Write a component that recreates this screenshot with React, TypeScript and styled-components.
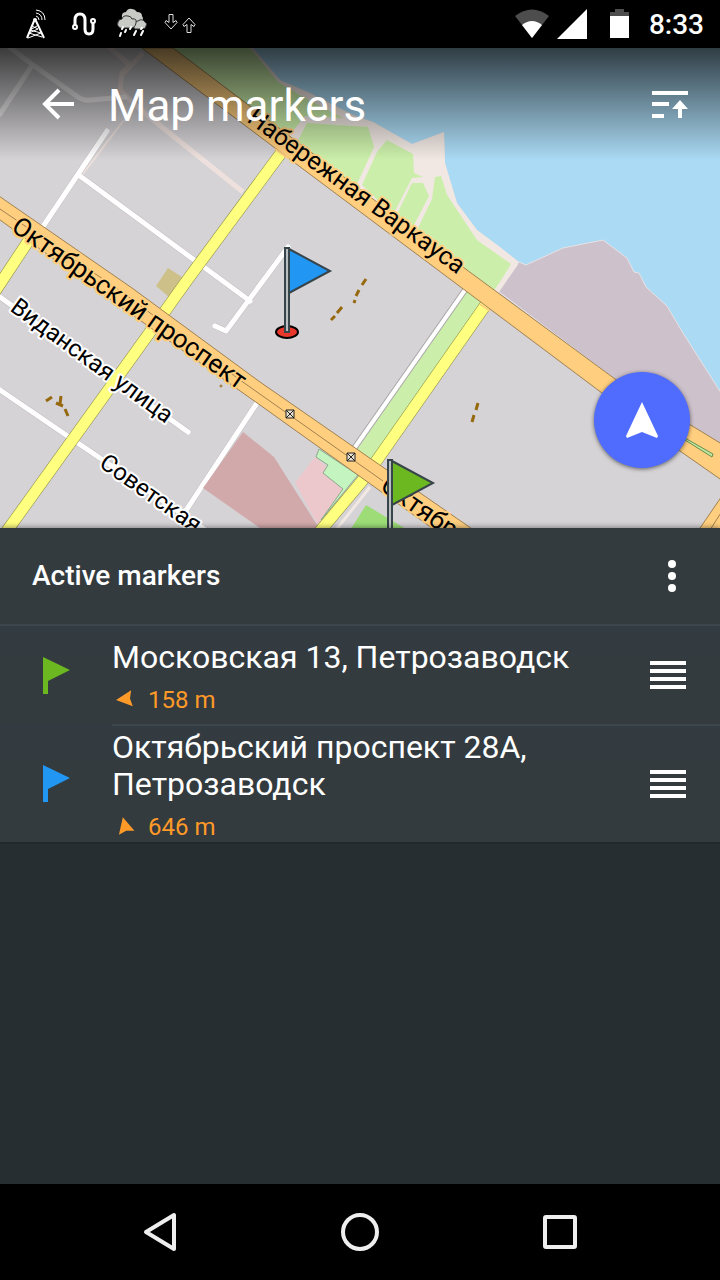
import React from "react";
import styled, { createGlobalStyle } from "styled-components";

const GlobalStyle = createGlobalStyle`
  *, *::before, *::after { box-sizing: border-box; }
  body { margin: 0; background: #262d31; }
  button { padding: 0; border: 0; background: none; color: inherit; font: inherit; cursor: pointer; }
  svg { display: block; }
`;

const Screen = styled.div`
  display: flex;
  flex-direction: column;
  min-height: 100vh;
  color: #fff;
  font-family: Roboto, "Noto Sans", sans-serif;
`;

const StatusBar = styled.header`
  display: flex;
  justify-content: space-between;
  align-items: center;
  height: 48px;
  padding: 0 16px 0 26px;
  background: #000;
`;

const StatusGroup = styled.div`
  display: flex;
  align-items: center;
  gap: 20px;
`;

const Clock = styled.time`
  padding-top: 2px;
  font-size: 28px;
  font-weight: 500;
  line-height: 32px;
`;

const MapArea = styled.section`
  position: relative;
  height: 480px;
  overflow: hidden;
  background: #d5d3d6;
`;

const MapDrawing = styled.svg`
  width: 100%;
  height: 100%;
`;

const StreetName = styled.text<{ $halo: string; $size: number }>`
  font-size: ${(p) => p.$size}px;
  fill: #000;
  stroke: ${(p) => p.$halo};
  stroke-width: 4px;
  stroke-linejoin: round;
  paint-order: stroke;
`;

const AppBar = styled.div`
  position: absolute;
  inset: 0 0 auto;
  display: flex;
  align-items: center;
  gap: 24px;
  height: 112px;
  padding: 0 24px 0 32px;
  background: linear-gradient(rgba(0, 0, 0, 0.72), rgba(0, 0, 0, 0));
`;

const Title = styled.h1`
  flex: 1;
  margin: 0;
  padding-top: 4px;
  font-size: 44px;
  font-weight: 400;
  line-height: 52px;
`;

const IconButton = styled.button`
  display: grid;
  flex: none;
  place-items: center;
  width: 52px;
  height: 56px;
`;

const LocateButton = styled.button`
  position: absolute;
  right: 30px;
  bottom: 60px;
  display: grid;
  place-items: center;
  width: 96px;
  height: 96px;
  border-radius: 50%;
  background: #4f6cff;
  box-shadow: 0 1px 4px rgba(0, 0, 0, 0.55);
`;

const Panel = styled.main`
  position: relative;
  flex: 1;
  background: #272e32;
  box-shadow: 0 -1px 5px rgba(0, 0, 0, 0.4);
`;

const PanelHeader = styled.div`
  display: flex;
  align-items: center;
  justify-content: space-between;
  height: 98px;
  padding: 0 22px 0 32px;
  border-bottom: 2px solid #3e464d;
  background: #333b3e;
`;

const PanelTitle = styled.h2`
  margin: 0;
  font-size: 28px;
  font-weight: 500;
  line-height: 32px;
`;

const MarkerList = styled.ul`
  margin: 0;
  padding: 0;
  list-style: none;
  border-bottom: 2px solid #22292c;
`;

const MarkerRow = styled.li`
  display: flex;
  align-items: stretch;
  background: linear-gradient(#333b42, #333b3e 50px);
`;

const FlagCell = styled.div`
  display: grid;
  flex: none;
  place-items: center;
  width: 112px;
`;

const MarkerBody = styled.div<{ $divided: boolean }>`
  display: flex;
  flex: 1;
  align-items: center;
  justify-content: space-between;
  gap: 16px;
  min-height: 100px;
  padding: 0 26px 1px 0;
  border-bottom: ${(p) => (p.$divided ? "2px solid #3e464d" : "0")};
`;

const MarkerText = styled.div`
  display: flex;
  flex-direction: column;
  gap: 10px;
  padding-top: 3px;
`;

const MarkerName = styled.div`
  font-size: 32px;
  line-height: 37px;
`;

const Distance = styled.div`
  display: flex;
  align-items: center;
  gap: 12px;
  color: #ff9a29;
  font-size: 24px;
  line-height: 28px;
`;

const HandleButton = styled(IconButton)`
  height: 44px;
`;

const NavBar = styled.nav`
  display: flex;
  justify-content: center;
  height: 96px;
  background: #000;
`;

const NavButton = styled.button`
  display: grid;
  place-items: center;
  width: 200px;
`;

const markers = [
  { name: "Московская 13, Петрозаводск", distance: "158 m", color: "#6cb820", heading: -96 },
  { name: "Октябрьский проспект 28А, Петрозаводск", distance: "646 m", color: "#2196f3", heading: -14 },
];

function StatusIcons() {
  return (
    <svg width="172" height="32" viewBox="26 8 172 32" fill="none" stroke="#fff" aria-hidden="true">
      <g strokeWidth="2">
        <path d="M34 21 27 38M36 21l8 17" />
        <path d="m32 26 6 3-9 4 13 4M37 26l-7 4 11 3-13 5" strokeWidth="1" />
        <circle cx="35" cy="20" r="2" fill="#fff" stroke="none" />
        <path d="M36 16q3 1 3 4M36 13q6 1 6 7M36 10q9 1 9 10" strokeWidth="1" />
      </g>
      <path d="M75 25V20q0-6 5-6t5 6v9q0 5 4 5t4-5v-6" strokeWidth="3" />
      <circle cx="75" cy="27" r="2" fill="#000" strokeWidth="2" />
      <circle cx="93" cy="21" r="2" fill="#000" strokeWidth="2" />
      <g fill="#c8cac6" stroke="none">
        <path d="M122 18q-1-6 4-6 2-4 6-3 3 0 5 3 5 0 5 4 2 3 0 6h-20z" />
        <path d="M134 28q-1-7 4-7 4-3 7 1 3 2 1 4 0 3-4 3h-7z" stroke="#333" />
        <path d="M120 28q-4-3-2-6 1-3 4-3 1-4 6-3 3 0 4 3 5-1 4 4-1 5-5 5z" stroke="#333" />
      </g>
      <path d="m123 27-1 2m9-2-1 2m12-1-1 1M121 33l-1 3m6-6-1 2m11-1-2 4m9-4-2 4" strokeWidth="2" strokeLinecap="round" />
      <path d="M169 14.500h4v8l3-2 1 2-6 6.500-6-6.500 1-2 3 2zM187 32.500h4v-8l3 2 1-2-6-6.500-6 6.500 1 2 3-2z" stroke="#ddd" />
    </svg>
  );
}

function MapView() {
  return (
    <MapDrawing viewBox="0 48 720 480" preserveAspectRatio="xMidYMid slice" role="img" aria-label="Map">
      <path fill="#aadaf4" d="M253 48 280 80 310 93 353 115 373 122 412 144 444 132 445 163 457 203 477 230 519 262 526 265 563 248 603 240 627 258 634 272 639 273 646 287 667 306 683 333 720 393V48Z" />
      <path fill="#f1e8e3" d="M160 48H253L280 80 310 93 353 115 373 122 412 144 444 132 445 163 457 203 477 230 500 247 519 262 495 295Z" />
      <path fill="#cbefaa" d="M170 48H250L278 82 300 95 343 118 305 116 292 132 284 140Z" />
      <path fill="#cbefaa" d="m307 123 61 4 6 20-16 35-2 8-60-46zM387 140l26 14 1 19 9 4-11 1-17 33-4 2-29-28 15-33zM412 183h11l6 13-16 31-3 4-14-15zM435 177l6-1 6 19 30 45 34 24-15 25-4 3-76-60 16-33z" />
      <path fill="#cdc1cb" stroke="#e6e2e6" d="m519 262 7 3 37-17 40-8 24 18 7 14 5 1 7 14 21 19 16 27 40 63v65l-225-170z" />
      <path stroke="#f1e8e3" strokeWidth="5" d="m516 263-20 29" />

      <g fill="none" stroke="#eee1dd" strokeWidth="5">
        <path d="m108 46 22 19-8 8-2 17 7 7 20 18 96 77M143 53l-20 21" />
        <path strokeWidth="2" d="m124 120-42 55" />
      </g>
      <g fill="none" stroke="#c4c0c2" strokeWidth="6" strokeLinejoin="round">
        <path d="m107 131-65 97M80 176l170 125M288 247l-62 84-11-5M0 297l188 135M0 390l210 143M257 403l-74 112" />
      </g>
      <g fill="none" stroke="#fff" strokeWidth="5" strokeLinejoin="round" strokeLinecap="round">
        <path d="m107 131-65 97M80 176l170 125M288 247l-62 84-11-5M0 297l188 135M0 390l210 143M257 403l-74 112" />
        <path stroke="#f5f3f4" d="m8 46 25 19 45 32q6 4 12 3l35-3M31 67 0 114" />
      </g>

      <path fill="#cdc189" d="m168 268 14 9-13 20-13-11z" />
      <path fill="#d2a9ab" d="m243 432 31 25 45 71h-59l-57-40z" />
      <path fill="#ecc8cc" d="m315 457 12 10-4 6 20 16-25 36-23-42z" />
      <path fill="#c4f4c0" stroke="#8da98b" d="m319 449 39 26-37 45 22-31-20-16 5-8-12-8z" />
      <path fill="#9ddc77" d="m366 505 45 27h-62z" />
      <path stroke="#f1e8e3" strokeWidth="3" d="m370 487-34 43" />
      <path fill="#cbefaa" d="m466 291 16 12-110 158-16-10z" />
      <path stroke="#aaa6a8" strokeWidth="6" d="m465 290-112 160" />
      <path stroke="#fff" strokeWidth="4" d="m465 290-112 160" />

      <g fill="none" stroke="#89893f" strokeWidth="12">
        <path d="M29 240-12 302M284 149 188 279l-25 35L4 535" />
        <path d="m487 303-112 160-13 18-46 55" />
      </g>
      <g fill="none" stroke="#ffff80" strokeWidth="11">
        <path d="M29 240-12 302M284 149 188 279l-25 35L4 535" />
        <path d="m487 303-112 160-13 18-46 55" />
      </g>

      <g fill="#ffcf7f" stroke="#a08150">
        <path d="M173 48 467 270 615 379 730 449V486L680 451 602 393 490 309 287 157 142 48Z" />
        <path d="M-4 194 132 288 260 382 387 470 478 533H439L383 493 260 405 83 280-4 217Z" />
        <path d="m724 493-26 38h26z" />
        <path fill="#bfe79d" stroke="#688d4e" d="m685 438 28 16-1 3-27-17z" />
      </g>
      <path fill="none" stroke="#a08150" d="m0 209 122 83 118 88 143 101M724 508l-14 22" />
      <path d="M275 149 289 159M25 236l10 7M480 304l10 7" stroke="#ffcf7f" strokeWidth="2" fill="none" />

      <g stroke="#96690f" strokeWidth="3" fill="none">
        <path d="m52 397-6 4M61 396l-1 8m-4-1 7 3M65 409l3 7M366 279l-4 6m-3 5-3 6m-1 4-1 3M342 307l-5 6m-2 3-4 4M478 403l-2 7m-2 5-2 7" />
        <circle cx="221" cy="386" r="1" strokeWidth="1" />
      </g>
      <g stroke="#222" fill="#e8dfcf">
        <path d="M286 410h8v8h-8zl8 8m0-8-8 8M347 453h8v8h-8zl8 8m0-8-8 8" />
      </g>

      <StreetName $halo="#ffcf7f" $size={25} transform="translate(246 121) rotate(36)">Набережная Варкауса</StreetName>
      <StreetName $halo="#ffcf7f" $size={26} transform="translate(10 230) rotate(35)">Октябрьский проспект</StreetName>
      <StreetName $halo="#ffcf7f" $size={26} transform="translate(379 489) rotate(35)">Октябр</StreetName>
      <StreetName $halo="#fff" $size={24} transform="translate(9 310) rotate(36)">Виданская улица</StreetName>
      <StreetName $halo="#fff" $size={24} transform="translate(98 466) rotate(35)">Советская</StreetName>

      <g stroke="#37444a" strokeWidth="2">
        <ellipse cx="287" cy="332" rx="11" ry="6" fill="#e8382e" stroke="#000" />
        <path fill="#2196f3" d="m289 249 41 22-41 22z" />
        <path fill="#b9bec0" d="M285 248h4v84h-4z" />
        <path fill="#6cb820" d="m392 461 41 22-41 22z" />
        <path fill="#b9bec0" d="M388 460h4v76h-4z" />
      </g>
    </MapDrawing>
  );
}

export default function App() {
  return (
    <Screen>
      <GlobalStyle />
      <StatusBar>
        <StatusIcons />
        <StatusGroup>
          <svg width="116" height="32" viewBox="513 8 116 32" fill="#fff" aria-hidden="true">
            <path fill="#4d4d4d" d="M515 16q17-13 34 0l-17 22z" />
            <path d="M522 25q10-8 20 0l-10 13z" />
            <path d="M587 9v30h-30z" />
            <path fill="#4d4d4d" d="M615 9h9v3h5v5h-19v-5h5z" />
            <path d="M610 16h19v22h-19z" />
          </svg>
          <Clock>8:33</Clock>
        </StatusGroup>
      </StatusBar>

      <MapArea>
        <MapView />
        <AppBar>
          <IconButton aria-label="Back">
            <svg width="34" height="32" viewBox="0 0 34 32" fill="none" stroke="#fff" strokeWidth="4">
              <path d="M33 16H4M18 2 4 16l14 14" />
            </svg>
          </IconButton>
          <Title>Map markers</Title>
          <IconButton aria-label="Sort">
            <svg width="36" height="28" viewBox="0 0 36 28" fill="#fff">
              <path d="M0 1h36v4H0zM0 12h17v4H0zM0 24h12v4H0zM28 10l8 9h-6v9h-4v-9h-6z" />
            </svg>
          </IconButton>
        </AppBar>
        <LocateButton aria-label="My location">
          <svg width="32" height="36" viewBox="0 0 32 36" fill="#fff">
            <path d="m16 0 16 34-1 2-15-6-15 6-1-2z" />
          </svg>
        </LocateButton>
      </MapArea>

      <Panel>
        <PanelHeader>
          <PanelTitle>Active markers</PanelTitle>
          <IconButton aria-label="More options">
            <svg width="8" height="32" viewBox="0 0 8 32" fill="#fff">
              <circle cx="4" cy="4" r="4" />
              <circle cx="4" cy="16" r="4" />
              <circle cx="4" cy="28" r="4" />
            </svg>
          </IconButton>
        </PanelHeader>
        <MarkerList>
          {markers.map((marker, index) => (
            <MarkerRow key={marker.name}>
              <FlagCell>
                <svg width="28" height="38" viewBox="0 0 28 38" fill={marker.color} aria-hidden="true">
                  <path d="m1 0 27 13-22 11v13H1z" />
                </svg>
              </FlagCell>
              <MarkerBody $divided={index < markers.length - 1}>
                <MarkerText>
                  <MarkerName>{marker.name}</MarkerName>
                  <Distance>
                    <svg width="24" height="24" viewBox="0 0 24 24" fill="currentColor" aria-hidden="true">
                      <path transform={`rotate(${marker.heading} 13 11)`} d="m13 2 8 16-8-2-8 2z" />
                    </svg>
                    {marker.distance}
                  </Distance>
                </MarkerText>
                <HandleButton aria-label={`Reorder ${marker.name}`}>
                  <svg width="36" height="28" viewBox="0 0 36 28" fill="#fff">
                    <path d="M0 0h36v4H0zM0 8h36v4H0zM0 16h36v4H0zM0 24h36v4H0z" />
                  </svg>
                </HandleButton>
              </MarkerBody>
            </MarkerRow>
          ))}
        </MarkerList>
      </Panel>

      <NavBar aria-label="System navigation">
        <NavButton aria-label="Back">
          <svg width="34" height="40" viewBox="0 0 34 40" fill="none" stroke="#eee" strokeWidth="4" strokeLinejoin="round">
            <path d="M31 3v34L3 20z" />
          </svg>
        </NavButton>
        <NavButton aria-label="Home">
          <svg width="40" height="40" viewBox="0 0 40 40" fill="none" stroke="#eee" strokeWidth="4">
            <circle cx="20" cy="20" r="17" />
          </svg>
        </NavButton>
        <NavButton aria-label="Recent apps">
          <svg width="34" height="34" viewBox="0 0 34 34" fill="none" stroke="#eee" strokeWidth="4">
            <rect x="2" y="2" width="30" height="30" rx="1" />
          </svg>
        </NavButton>
      </NavBar>
    </Screen>
  );
}
